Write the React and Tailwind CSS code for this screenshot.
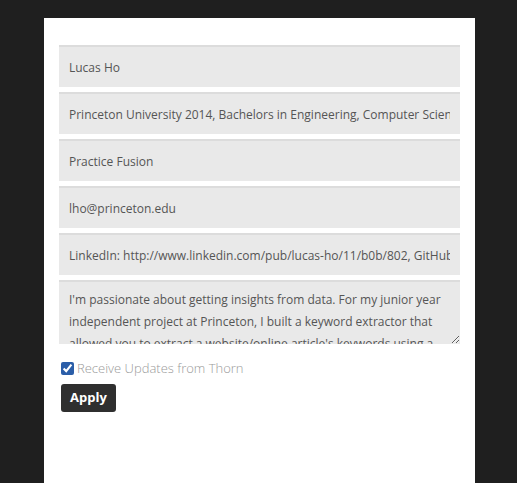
import React from "react";

const FIELDS = [
  "Lucas Ho",
  "Princeton University 2014, Bachelors in Engineering, Computer Science",
  "Practice Fusion",
  "lho@princeton.edu",
  "LinkedIn: http://www.linkedin.com/pub/lucas-ho/11/b0b/802, GitHub: https://github.com/lucasho",
];

const BIO =
  "I'm passionate about getting insights from data. For my junior year independent project at Princeton, I built a keyword extractor that allowed you to extract a website/online article's keywords using a combination of natural language processing techniques.";

export default function App() {
  return (
    <div
      className="min-h-[483px] bg-[#1f1f1f] pl-[44px] pt-[18px]"
      style={{ fontFamily: '"Open Sans", "Liberation Sans", sans-serif' }}
    >
      <div className="w-[431px] min-h-[465px] bg-white px-[15px] pt-[27px] pb-10">
        <div className="flex flex-col gap-[5px]">
          {FIELDS.map((value, i) => (
            <input
              key={i}
              type="text"
              defaultValue={value}
              className="h-[42px] w-[401px] border-t-2 border-[#dcdcdc] bg-[#e9e9e9] px-[10px] text-[12px] text-[#555] outline-none"
            />
          ))}
          <textarea
            defaultValue={BIO}
            className="h-[64px] w-[401px] overflow-hidden border-t-2 border-[#dcdcdc] bg-[#e9e9e9] px-[10px] pt-[7px] text-[12px] leading-[22px] text-[#555] outline-none"
          />
        </div>

        <label className="mt-[15px] flex items-center gap-[3px] pl-[2px]">
          <input
            type="checkbox"
            defaultChecked
            className="m-0 h-[13px] w-[13px] accent-[#2b5ea8]"
          />
          <span className="text-[13px] font-light text-[#9a9a9a]">
            Receive Updates from Thorn
          </span>
        </label>

        <button className="ml-[2px] mt-[5px] flex h-[28px] w-[55px] items-center justify-center rounded-[3px] bg-[#2f2f2f] text-[13px] font-bold text-white">
          Apply
        </button>
      </div>
    </div>
  );
}
